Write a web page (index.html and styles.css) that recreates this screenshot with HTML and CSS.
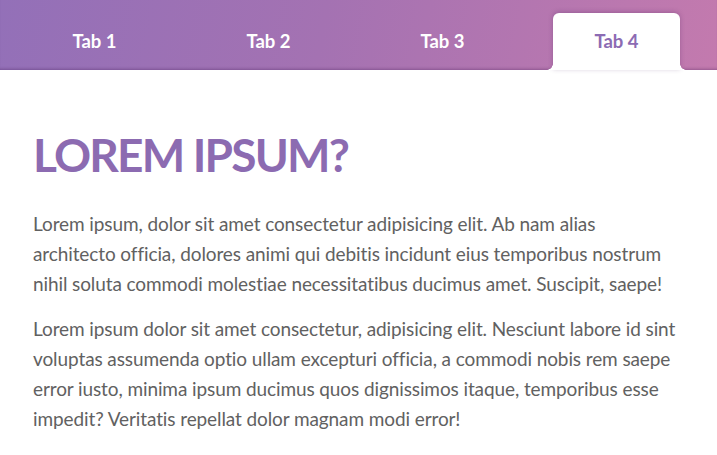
FILE: index.html
```html
<!DOCTYPE html>
<html lang="en">
<head>
<meta charset="utf-8">
<title>Tabs</title>
<link rel="stylesheet" href="styles.css">
</head>
<body>
<nav class="tabs">
  <div class="tab">Tab 1</div>
  <div class="tab">Tab 2</div>
  <div class="tab">Tab 3</div>
  <div class="tab tab-active">Tab 4</div>
</nav>
<main class="content">
  <h1 class="title">LOREM IPSUM?</h1>
  <p class="text">Lorem ipsum, dolor sit amet consectetur adipisicing elit. Ab nam alias<br>architecto officia, dolores animi qui debitis incidunt eius temporibus nostrum<br>nihil soluta commodi molestiae necessitatibus ducimus amet. Suscipit, saepe!</p>
  <p class="text">Lorem ipsum dolor sit amet consectetur, adipisicing elit. Nesciunt labore id sint<br>voluptas assumenda optio ullam excepturi officia, a commodi nobis rem saepe<br>error iusto, minima ipsum ducimus quos dignissimos itaque, temporibus esse<br>impedit? Veritatis repellat dolor magnam modi error!</p>
</main>
</body>
</html>
```

FILE: styles.css
```css
html, body {
  margin: 0;
  padding: 0;
  background: #ffffff;
}

body {
  font-family: Lato, "Liberation Sans", sans-serif;
  width: 717px;
  height: 455px;
  overflow: hidden;
}

.tabs {
  display: flex;
  align-items: stretch;
  gap: 47px;
  height: 57px;
  padding: 13px 0 0 31px;
  background: linear-gradient(100deg, #9370b8 0%, #a472b2 45%, #c37aae 100%);
  box-shadow: inset 0 -3px 3px -2px rgba(60, 20, 80, 0.35);
}

.tab {
  position: relative;
  width: 127px;
  display: flex;
  align-items: center;
  justify-content: center;
  color: #ffffff;
  font-weight: 700;
  font-size: 18.5px;
  padding-bottom: 1px;
  box-sizing: border-box;
}

.tab-active {
  background: #ffffff;
  color: #8c6bb3;
  border-radius: 6px 6px 0 0;
  box-shadow: 0 -1px 5px rgba(70, 30, 90, 0.28);
}

.tab-active::before,
.tab-active::after {
  content: "";
  position: absolute;
  bottom: 0;
  width: 6px;
  height: 6px;
}

.tab-active::before {
  left: -6px;
  background: radial-gradient(circle at 0 0, transparent 5.5px, #ffffff 6px);
}

.tab-active::after {
  right: -6px;
  background: radial-gradient(circle at 100% 0, transparent 5.5px, #ffffff 6px);
}

.content {
  padding: 55px 20px 0 33px;
}

.title {
  margin: 0 0 24px 0;
  font-size: 46px;
  line-height: 60px;
  letter-spacing: -1.8px;
  font-weight: 700;
  color: #8c6bb1;
}

.text {
  margin: 0 0 15px 0;
  font-size: 19px;
  line-height: 30px;
  letter-spacing: -0.1px;
  color: #616161;
  white-space: nowrap;
}
```
